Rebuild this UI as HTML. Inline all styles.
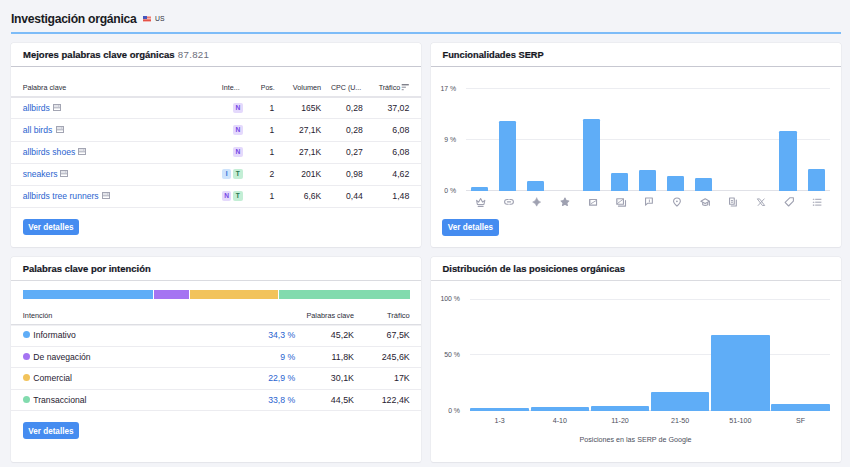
<!DOCTYPE html>
<html><head><meta charset="utf-8">
<style>
*{box-sizing:border-box;margin:0;padding:0}
html,body{width:850px;height:467px;overflow:hidden;background:#f3f4f8;font-family:"Liberation Sans",sans-serif;position:relative}
.t{position:absolute;white-space:nowrap;line-height:1}
.r{position:absolute}
</style></head><body>
<div class="t" style="top:13px;font-size:12.2px;color:#191b23;font-weight:700;letter-spacing:-0.3px;left:11.00px;">Investigación orgánica</div>
<svg class="r" style="left:143px;top:16px" width="8" height="6" viewBox="0 0 8 6"><rect width="8" height="6" fill="#f4b4b0"/><rect y="1" width="8" height="1" fill="#ee7a72"/><rect y="3.6" width="8" height="1.2" fill="#e03a2e"/><rect width="4" height="3" fill="#4656bd"/></svg>
<div class="t" style="top:16px;font-size:6.8px;color:#2b2d38;left:155.00px;">US</div>
<div class="r" style="left:11.00px;top:32.20px;width:830.00px;height:2.00px;background:#7dbcf8;"></div>
<div class="r" style="left:11.00px;top:43.00px;width:410.00px;height:204.00px;background:#fff;border-radius:2.5px;box-shadow:0 0 0 0.5px #e6e7ec,0 0.5px 1px rgba(30,35,60,0.07);"></div>
<div class="r" style="left:431.00px;top:43.00px;width:410.00px;height:204.00px;background:#fff;border-radius:2.5px;box-shadow:0 0 0 0.5px #e6e7ec,0 0.5px 1px rgba(30,35,60,0.07);"></div>
<div class="r" style="left:11.00px;top:256.50px;width:410.00px;height:205.50px;background:#fff;border-radius:2.5px;box-shadow:0 0 0 0.5px #e6e7ec,0 0.5px 1px rgba(30,35,60,0.07);"></div>
<div class="r" style="left:431.00px;top:256.50px;width:410.00px;height:205.50px;background:#fff;border-radius:2.5px;box-shadow:0 0 0 0.5px #e6e7ec,0 0.5px 1px rgba(30,35,60,0.07);"></div>
<div class="r" style="left:11.00px;top:66.00px;width:410.00px;height:1.00px;background:#c7c8d1;"></div>
<div class="r" style="left:431.00px;top:66.00px;width:410.00px;height:1.00px;background:#c7c8d1;"></div>
<div class="r" style="left:11.00px;top:280.00px;width:410.00px;height:1.00px;background:#dadbe0;"></div>
<div class="r" style="left:431.00px;top:280.00px;width:410.00px;height:1.00px;background:#dadbe0;"></div>
<div class="t" style="top:50px;font-size:9.5px;color:#15171f;font-weight:700;left:23.00px;-webkit-text-stroke:0.2px #15171f;">Mejores palabras clave orgánicas <span style="font-weight:400;color:#6c6e7b;-webkit-text-stroke:0;letter-spacing:0.3px;font-size:9.7px;margin-left:0.6px">87.821</span></div>
<div class="t" style="top:51px;font-size:9.3px;color:#15171f;font-weight:700;left:442.50px;-webkit-text-stroke:0.2px #15171f;">Funcionalidades SERP</div>
<div class="t" style="top:264px;font-size:9.45px;color:#15171f;font-weight:700;left:22.70px;-webkit-text-stroke:0.2px #15171f;">Palabras clave por intención</div>
<div class="t" style="top:264px;font-size:9.4px;color:#15171f;font-weight:700;left:442.50px;-webkit-text-stroke:0.2px #15171f;">Distribución de las posiciones orgánicas</div>
<div class="t" style="top:84px;font-size:7.2px;color:#2b2d38;left:22.70px;">Palabra clave</div>
<div class="t" style="top:84px;font-size:7.2px;color:#2b2d38;left:221.70px;">Inte...</div>
<div class="t" style="top:84px;font-size:7.0px;color:#2b2d38;left:-25.20px;width:300px;text-align:right;">Pos.</div>
<div class="t" style="top:84px;font-size:7.3px;color:#2b2d38;left:21.20px;width:300px;text-align:right;">Volumen</div>
<div class="t" style="top:85px;font-size:7.1px;color:#2b2d38;left:61.30px;width:300px;text-align:right;">CPC (U...</div>
<div class="t" style="top:85px;font-size:7.15px;color:#2b2d38;left:100.20px;width:300px;text-align:right;">Tráfico</div>
<svg class="r" style="left:401px;top:83.5px" width="8" height="7" viewBox="0 0 8 7"><rect x="0.7" y="0.3" width="7.1" height="1" fill="#4a4c5a"/><rect x="0.7" y="2.7" width="4.2" height="1" fill="#8a8c99"/><rect x="0.7" y="5.2" width="2" height="1" fill="#8a8c99"/></svg>
<div class="r" style="left:11.00px;top:96.00px;width:410.00px;height:2.00px;background:#e5e5ea;"></div>
<div class="t" style="top:104px;font-size:8.6px;color:#2a64cf;left:22.70px;">allbirds</div>
<svg class="r" style="left:52.90px;top:104.10px" width="8" height="7" viewBox="0 0 8 7"><rect x="1" y="1" width="6" height="2.6" fill="#e3e4e9"/><rect x="0.5" y="0.5" width="7" height="6" fill="none" stroke="#a3a5b3" stroke-width="1"/><rect x="1" y="3.4" width="6" height="0.9" fill="#a3a5b3"/><rect x="5.3" y="1" width="0.8" height="2.5" fill="#c4c6d0"/></svg>
<div class="r" style="left:233.10px;top:103.10px;width:9.5px;height:9.5px;border-radius:2px;background:#e4d9fc;color:#7446e6;font-size:6.6px;font-weight:700;line-height:9.5px;text-align:center">N</div>
<div class="t" style="top:104px;font-size:8.5px;color:#1f2130;left:-25.70px;width:300px;text-align:right;">1</div>
<div class="t" style="top:104px;font-size:8.5px;color:#1f2130;left:21.20px;width:300px;text-align:right;">165K</div>
<div class="t" style="top:104px;font-size:8.6px;color:#1f2130;left:62.80px;width:300px;text-align:right;">0,28</div>
<div class="t" style="top:104px;font-size:8.8px;color:#1f2130;left:109.40px;width:300px;text-align:right;">37,02</div>
<div class="r" style="left:11.00px;top:118.40px;width:410.00px;height:1.00px;background:#ececf0;"></div>
<div class="t" style="top:126px;font-size:8.6px;color:#2a64cf;left:22.70px;">all birds</div>
<svg class="r" style="left:55.60px;top:126.10px" width="8" height="7" viewBox="0 0 8 7"><rect x="1" y="1" width="6" height="2.6" fill="#e3e4e9"/><rect x="0.5" y="0.5" width="7" height="6" fill="none" stroke="#a3a5b3" stroke-width="1"/><rect x="1" y="3.4" width="6" height="0.9" fill="#a3a5b3"/><rect x="5.3" y="1" width="0.8" height="2.5" fill="#c4c6d0"/></svg>
<div class="r" style="left:233.10px;top:125.10px;width:9.5px;height:9.5px;border-radius:2px;background:#e4d9fc;color:#7446e6;font-size:6.6px;font-weight:700;line-height:9.5px;text-align:center">N</div>
<div class="t" style="top:126px;font-size:8.5px;color:#1f2130;left:-25.70px;width:300px;text-align:right;">1</div>
<div class="t" style="top:126px;font-size:8.5px;color:#1f2130;left:21.20px;width:300px;text-align:right;">27,1K</div>
<div class="t" style="top:126px;font-size:8.6px;color:#1f2130;left:62.80px;width:300px;text-align:right;">0,28</div>
<div class="t" style="top:126px;font-size:8.8px;color:#1f2130;left:109.40px;width:300px;text-align:right;">6,08</div>
<div class="r" style="left:11.00px;top:140.70px;width:410.00px;height:1.00px;background:#ececf0;"></div>
<div class="t" style="top:148px;font-size:8.6px;color:#2a64cf;left:22.70px;">allbirds shoes</div>
<svg class="r" style="left:78.40px;top:148.10px" width="8" height="7" viewBox="0 0 8 7"><rect x="1" y="1" width="6" height="2.6" fill="#e3e4e9"/><rect x="0.5" y="0.5" width="7" height="6" fill="none" stroke="#a3a5b3" stroke-width="1"/><rect x="1" y="3.4" width="6" height="0.9" fill="#a3a5b3"/><rect x="5.3" y="1" width="0.8" height="2.5" fill="#c4c6d0"/></svg>
<div class="r" style="left:233.10px;top:147.10px;width:9.5px;height:9.5px;border-radius:2px;background:#e4d9fc;color:#7446e6;font-size:6.6px;font-weight:700;line-height:9.5px;text-align:center">N</div>
<div class="t" style="top:148px;font-size:8.5px;color:#1f2130;left:-25.70px;width:300px;text-align:right;">1</div>
<div class="t" style="top:148px;font-size:8.5px;color:#1f2130;left:21.20px;width:300px;text-align:right;">27,1K</div>
<div class="t" style="top:148px;font-size:8.6px;color:#1f2130;left:62.80px;width:300px;text-align:right;">0,27</div>
<div class="t" style="top:148px;font-size:8.8px;color:#1f2130;left:109.40px;width:300px;text-align:right;">6,08</div>
<div class="r" style="left:11.00px;top:163.00px;width:410.00px;height:1.00px;background:#ececf0;"></div>
<div class="t" style="top:170px;font-size:8.6px;color:#2a64cf;left:22.70px;">sneakers</div>
<svg class="r" style="left:60.40px;top:170.10px" width="8" height="7" viewBox="0 0 8 7"><rect x="1" y="1" width="6" height="2.6" fill="#e3e4e9"/><rect x="0.5" y="0.5" width="7" height="6" fill="none" stroke="#a3a5b3" stroke-width="1"/><rect x="1" y="3.4" width="6" height="0.9" fill="#a3a5b3"/><rect x="5.3" y="1" width="0.8" height="2.5" fill="#c4c6d0"/></svg>
<div class="r" style="left:233.10px;top:169.10px;width:9.5px;height:9.5px;border-radius:2px;background:#c3eed5;color:#2a7550;font-size:6.6px;font-weight:700;line-height:9.5px;text-align:center">T</div>
<div class="r" style="left:221.80px;top:169.10px;width:9.5px;height:9.5px;border-radius:2px;background:#cde3fc;color:#2e6fd8;font-size:6.6px;font-weight:700;line-height:9.5px;text-align:center">I</div>
<div class="t" style="top:170px;font-size:8.5px;color:#1f2130;left:-25.70px;width:300px;text-align:right;">2</div>
<div class="t" style="top:170px;font-size:8.5px;color:#1f2130;left:21.20px;width:300px;text-align:right;">201K</div>
<div class="t" style="top:170px;font-size:8.6px;color:#1f2130;left:62.80px;width:300px;text-align:right;">0,98</div>
<div class="t" style="top:170px;font-size:8.8px;color:#1f2130;left:109.40px;width:300px;text-align:right;">4,62</div>
<div class="r" style="left:11.00px;top:185.30px;width:410.00px;height:1.00px;background:#ececf0;"></div>
<div class="t" style="top:192px;font-size:8.6px;color:#2a64cf;left:22.70px;">allbirds tree runners</div>
<svg class="r" style="left:102.40px;top:192.10px" width="8" height="7" viewBox="0 0 8 7"><rect x="1" y="1" width="6" height="2.6" fill="#e3e4e9"/><rect x="0.5" y="0.5" width="7" height="6" fill="none" stroke="#a3a5b3" stroke-width="1"/><rect x="1" y="3.4" width="6" height="0.9" fill="#a3a5b3"/><rect x="5.3" y="1" width="0.8" height="2.5" fill="#c4c6d0"/></svg>
<div class="r" style="left:233.10px;top:191.10px;width:9.5px;height:9.5px;border-radius:2px;background:#c3eed5;color:#2a7550;font-size:6.6px;font-weight:700;line-height:9.5px;text-align:center">T</div>
<div class="r" style="left:221.80px;top:191.10px;width:9.5px;height:9.5px;border-radius:2px;background:#e4d9fc;color:#7446e6;font-size:6.6px;font-weight:700;line-height:9.5px;text-align:center">N</div>
<div class="t" style="top:192px;font-size:8.5px;color:#1f2130;left:-25.70px;width:300px;text-align:right;">1</div>
<div class="t" style="top:192px;font-size:8.5px;color:#1f2130;left:21.20px;width:300px;text-align:right;">6,6K</div>
<div class="t" style="top:192px;font-size:8.6px;color:#1f2130;left:62.80px;width:300px;text-align:right;">0,44</div>
<div class="t" style="top:192px;font-size:8.8px;color:#1f2130;left:109.40px;width:300px;text-align:right;">1,48</div>
<div class="r" style="left:11.00px;top:207.20px;width:410.00px;height:1.00px;background:#ececf0;"></div>
<div class="r" style="left:22.70px;top:218.70px;width:56.3px;height:16.5px;border-radius:3px;background:#458cf0"></div>
<div class="t" style="top:224px;font-size:8.15px;color:#fff;font-weight:700;left:-99.15px;width:300px;text-align:center;">Ver detalles</div>
<div class="t" style="top:86px;font-size:6.9px;color:#4d4f5c;left:156.20px;width:300px;text-align:right;">17 %</div>
<div class="t" style="top:137px;font-size:6.9px;color:#4d4f5c;left:156.20px;width:300px;text-align:right;">9 %</div>
<div class="t" style="top:188px;font-size:6.9px;color:#4d4f5c;left:156.20px;width:300px;text-align:right;">0 %</div>
<div class="r" style="left:465.50px;top:88.20px;width:364.50px;height:1.00px;background:#ecedf1;"></div>
<div class="r" style="left:465.50px;top:138.70px;width:364.50px;height:1.00px;background:#ecedf1;"></div>
<div class="r" style="left:465.50px;top:189.80px;width:364.50px;height:1.00px;background:#e0e1e7;"></div>
<div class="r" style="left:470.90px;top:187.20px;width:17.10px;height:3.60px;background:#5fadf7;border-radius:1.2px 1.2px 0 0;"></div>
<div class="r" style="left:498.95px;top:121.10px;width:17.10px;height:69.70px;background:#5fadf7;border-radius:1.2px 1.2px 0 0;"></div>
<div class="r" style="left:527.00px;top:181.00px;width:17.10px;height:9.80px;background:#5fadf7;border-radius:1.2px 1.2px 0 0;"></div>
<div class="r" style="left:583.10px;top:118.60px;width:17.10px;height:72.20px;background:#5fadf7;border-radius:1.2px 1.2px 0 0;"></div>
<div class="r" style="left:611.15px;top:173.00px;width:17.10px;height:17.80px;background:#5fadf7;border-radius:1.2px 1.2px 0 0;"></div>
<div class="r" style="left:639.20px;top:170.20px;width:17.10px;height:20.60px;background:#5fadf7;border-radius:1.2px 1.2px 0 0;"></div>
<div class="r" style="left:667.25px;top:175.60px;width:17.10px;height:15.20px;background:#5fadf7;border-radius:1.2px 1.2px 0 0;"></div>
<div class="r" style="left:695.30px;top:177.70px;width:17.10px;height:13.10px;background:#5fadf7;border-radius:1.2px 1.2px 0 0;"></div>
<div class="r" style="left:779.45px;top:131.40px;width:17.10px;height:59.40px;background:#5fadf7;border-radius:1.2px 1.2px 0 0;"></div>
<div class="r" style="left:807.50px;top:169.00px;width:17.10px;height:21.80px;background:#5fadf7;border-radius:1.2px 1.2px 0 0;"></div>
<svg class="r" style="left:460px;top:194px" width="380" height="16" viewBox="460 194 380 16" fill="none" stroke="#9fa1b1" stroke-width="1.1" stroke-linejoin="round" stroke-linecap="round">
<path d="M476.6,200.4 L478.7,202.1 L480.6,198.5 L482.5,202.1 L484.8,200.4 L483.9,204.5 L477.4,204.5 Z"/>
<path d="M478.2,206.3 H483.1" stroke-width="1.2"/>
<path d="M508.2,199.45 H507 A2.4,2.4 0 0 0 507,204.25 H508.2 M509.8,199.45 H511 A2.4,2.4 0 0 1 511,204.25 H509.8 M507.4,201.85 H510.6"/>
<path d="M536.7,198 Q537.7,201.1 540.7,202.1 Q537.7,203.1 536.7,206.2 Q535.7,203.1 532.6,202.1 Q535.7,201.1 536.7,198 Z" fill="#9fa1b1" stroke-width="0.5"/>
<path d="M564.95,198.10 L566.13,200.58 L568.85,200.93 L566.85,202.82 L567.36,205.52 L564.95,204.20 L562.54,205.52 L563.05,202.82 L561.05,200.93 L563.77,200.58 Z" fill="#9fa1b1" stroke-width="1.1"/>
<rect x="589.55" y="199.45" width="7" height="5.7"/>
<path d="M590.2,204.2 L596.4,200.4" stroke-width="0.9"/><path d="M590.6,200.3 V202.6" stroke-width="0.8" stroke="#c4c6d0"/>
<rect x="616.75" y="198.75" width="6.7" height="5.5"/>
<path d="M617.3,203.6 L623,199.3" stroke-width="0.9"/><path d="M617.7,199.6 V201.9" stroke-width="0.8" stroke="#c4c6d0"/>
<path d="M625.5,200.6 V206.1 H618.4"/>
<path d="M645.55,205.2 V197.95 H652.35 V203.3 H647.5 Z"/>
<path d="M649.4,199.9 V201.9" stroke-width="0.9"/>
<path d="M676.95,206.1 C674.6,204.1 673.55,202.7 673.55,201.35 A3.4,3.4 0 0 1 680.35,201.35 C680.35,202.7 679.3,204.1 676.95,206.1 Z"/>
<circle cx="676.9" cy="201.3" r="0.9" fill="#9fa1b1" stroke="none"/>
<path d="M700.9,201.3 L705.2,198.7 L709.5,201.3 L705.2,203.4 Z"/>
<path d="M702.7,202.5 V204.7 Q705.2,206 707.7,204.7 V202.5 M709.4,201.6 V205.2"/>
<rect x="729.55" y="197.95" width="4.7" height="6.3"/>
<path d="M731.3,200.6 H732.6 M731.3,202.2 H732.6" stroke-width="1"/>
<path d="M736.3,200.1 V206 H731.2"/>
<path d="M757.7,198.9 H759.6 L764.7,205.5 H762.8 Z" stroke-width="0.9"/>
<path d="M764.2,198.9 L758.1,205.5" stroke-width="0.9"/>
<path d="M785.1,202.3 L790,197.7 H793.4 V201.1 L788.6,206 Z"/>
<path d="M813.3,199.3 H813.9 M813.3,202.2 H813.9 M813.3,205.1 H813.9" stroke-width="1.1"/>
<path d="M815.6,199.3 H821 M815.6,202.2 H821 M815.6,205.1 H821" stroke-width="1"/>
</svg>
<div class="r" style="left:442.30px;top:219.20px;width:56.3px;height:16.5px;border-radius:3px;background:#458cf0"></div>
<div class="t" style="top:224px;font-size:8.15px;color:#fff;font-weight:700;left:320.45px;width:300px;text-align:center;">Ver detalles</div>
<div class="r" style="left:22.80px;top:290.00px;width:130.70px;height:9.00px;background:#5fadf7;"></div>
<div class="r" style="left:154.30px;top:290.00px;width:34.70px;height:9.00px;background:#a574f2;"></div>
<div class="r" style="left:189.90px;top:290.00px;width:88.30px;height:9.00px;background:#f2c35b;"></div>
<div class="r" style="left:279.20px;top:290.00px;width:130.80px;height:9.00px;background:#82dbae;"></div>
<div class="t" style="top:312px;font-size:7.3px;color:#2b2d38;left:22.80px;">Intención</div>
<div class="t" style="top:312px;font-size:7.25px;color:#2b2d38;left:54.00px;width:300px;text-align:right;">Palabras clave</div>
<div class="t" style="top:312px;font-size:7.55px;color:#2b2d38;left:109.80px;width:300px;text-align:right;">Tráfico</div>
<div class="r" style="left:11.00px;top:324.00px;width:410.00px;height:1.00px;background:#dddee3;"></div>
<div class="r" style="left:11.00px;top:325.00px;width:410.00px;height:1.00px;background:#f0f0f3;"></div>
<div class="r" style="left:22.70px;top:331.00px;width:7.10px;height:7.10px;background:#5fadf7;border-radius:50%;"></div>
<div class="t" style="top:331px;font-size:8.6px;color:#1f2130;left:33.30px;">Informativo</div>
<div class="t" style="top:331px;font-size:8.7px;color:#2a64cf;left:-4.80px;width:300px;text-align:right;">34,3 %</div>
<div class="t" style="top:331px;font-size:8.9px;color:#1f2130;left:54.00px;width:300px;text-align:right;">45,2K</div>
<div class="t" style="top:331px;font-size:8.9px;color:#1f2130;left:109.80px;width:300px;text-align:right;">67,5K</div>
<div class="r" style="left:11.00px;top:345.80px;width:410.00px;height:1.00px;background:#ececf0;"></div>
<div class="r" style="left:22.70px;top:353.00px;width:7.10px;height:7.10px;background:#a574f2;border-radius:50%;"></div>
<div class="t" style="top:353px;font-size:8.6px;color:#1f2130;left:33.30px;">De navegación</div>
<div class="t" style="top:353px;font-size:8.7px;color:#2a64cf;left:-4.80px;width:300px;text-align:right;">9 %</div>
<div class="t" style="top:353px;font-size:8.9px;color:#1f2130;left:54.00px;width:300px;text-align:right;">11,8K</div>
<div class="t" style="top:353px;font-size:8.9px;color:#1f2130;left:109.80px;width:300px;text-align:right;">245,6K</div>
<div class="r" style="left:11.00px;top:367.30px;width:410.00px;height:1.00px;background:#ececf0;"></div>
<div class="r" style="left:22.70px;top:374.00px;width:7.10px;height:7.10px;background:#f2c35b;border-radius:50%;"></div>
<div class="t" style="top:374px;font-size:8.6px;color:#1f2130;left:33.30px;">Comercial</div>
<div class="t" style="top:374px;font-size:8.7px;color:#2a64cf;left:-4.80px;width:300px;text-align:right;">22,9 %</div>
<div class="t" style="top:374px;font-size:8.9px;color:#1f2130;left:54.00px;width:300px;text-align:right;">30,1K</div>
<div class="t" style="top:374px;font-size:8.9px;color:#1f2130;left:109.80px;width:300px;text-align:right;">17K</div>
<div class="r" style="left:11.00px;top:388.80px;width:410.00px;height:1.00px;background:#ececf0;"></div>
<div class="r" style="left:22.70px;top:396.00px;width:7.10px;height:7.10px;background:#82dbae;border-radius:50%;"></div>
<div class="t" style="top:396px;font-size:8.6px;color:#1f2130;left:33.30px;">Transaccional</div>
<div class="t" style="top:396px;font-size:8.7px;color:#2a64cf;left:-4.80px;width:300px;text-align:right;">33,8 %</div>
<div class="t" style="top:396px;font-size:8.9px;color:#1f2130;left:54.00px;width:300px;text-align:right;">44,5K</div>
<div class="t" style="top:396px;font-size:8.9px;color:#1f2130;left:109.80px;width:300px;text-align:right;">122,4K</div>
<div class="r" style="left:11.00px;top:410.30px;width:410.00px;height:1.00px;background:#ececf0;"></div>
<div class="r" style="left:22.70px;top:422.20px;width:56.3px;height:16.5px;border-radius:3px;background:#458cf0"></div>
<div class="t" style="top:428px;font-size:8.15px;color:#fff;font-weight:700;left:-99.15px;width:300px;text-align:center;">Ver detalles</div>
<div class="t" style="top:296px;font-size:6.9px;color:#4d4f5c;left:160.00px;width:300px;text-align:right;">100 %</div>
<div class="t" style="top:352px;font-size:6.9px;color:#4d4f5c;left:160.00px;width:300px;text-align:right;">50 %</div>
<div class="t" style="top:408px;font-size:6.9px;color:#4d4f5c;left:160.00px;width:300px;text-align:right;">0 %</div>
<div class="r" style="left:470.00px;top:298.70px;width:360.00px;height:1.00px;background:#ecedf1;"></div>
<div class="r" style="left:470.00px;top:354.30px;width:360.00px;height:1.00px;background:#ecedf1;"></div>
<div class="r" style="left:470.00px;top:410.20px;width:360.00px;height:1.00px;background:#e0e1e7;"></div>
<div class="r" style="left:470.30px;top:407.90px;width:58.60px;height:2.90px;background:#5fadf7;border-radius:1px 1px 0 0;"></div>
<div class="t" style="top:418px;font-size:7.1px;color:#4d4f5c;left:349.60px;width:300px;text-align:center;">1-3</div>
<div class="r" style="left:530.50px;top:407.10px;width:58.60px;height:3.70px;background:#5fadf7;border-radius:1px 1px 0 0;"></div>
<div class="t" style="top:418px;font-size:7.1px;color:#4d4f5c;left:409.80px;width:300px;text-align:center;">4-10</div>
<div class="r" style="left:590.70px;top:406.00px;width:58.60px;height:4.80px;background:#5fadf7;border-radius:1px 1px 0 0;"></div>
<div class="t" style="top:418px;font-size:7.1px;color:#4d4f5c;left:470.00px;width:300px;text-align:center;">11-20</div>
<div class="r" style="left:650.90px;top:392.00px;width:58.60px;height:18.80px;background:#5fadf7;border-radius:1px 1px 0 0;"></div>
<div class="t" style="top:418px;font-size:7.1px;color:#4d4f5c;left:530.20px;width:300px;text-align:center;">21-50</div>
<div class="r" style="left:711.10px;top:335.20px;width:58.60px;height:75.60px;background:#5fadf7;border-radius:1px 1px 0 0;"></div>
<div class="t" style="top:418px;font-size:7.1px;color:#4d4f5c;left:590.40px;width:300px;text-align:center;">51-100</div>
<div class="r" style="left:771.30px;top:404.00px;width:58.60px;height:6.80px;background:#5fadf7;border-radius:1px 1px 0 0;"></div>
<div class="t" style="top:418px;font-size:7.1px;color:#4d4f5c;left:650.60px;width:300px;text-align:center;">SF</div>
<div class="t" style="top:437px;font-size:7.17px;color:#4d4f5c;left:485.50px;width:300px;text-align:center;">Posiciones en las SERP de Google</div>
</body></html>
